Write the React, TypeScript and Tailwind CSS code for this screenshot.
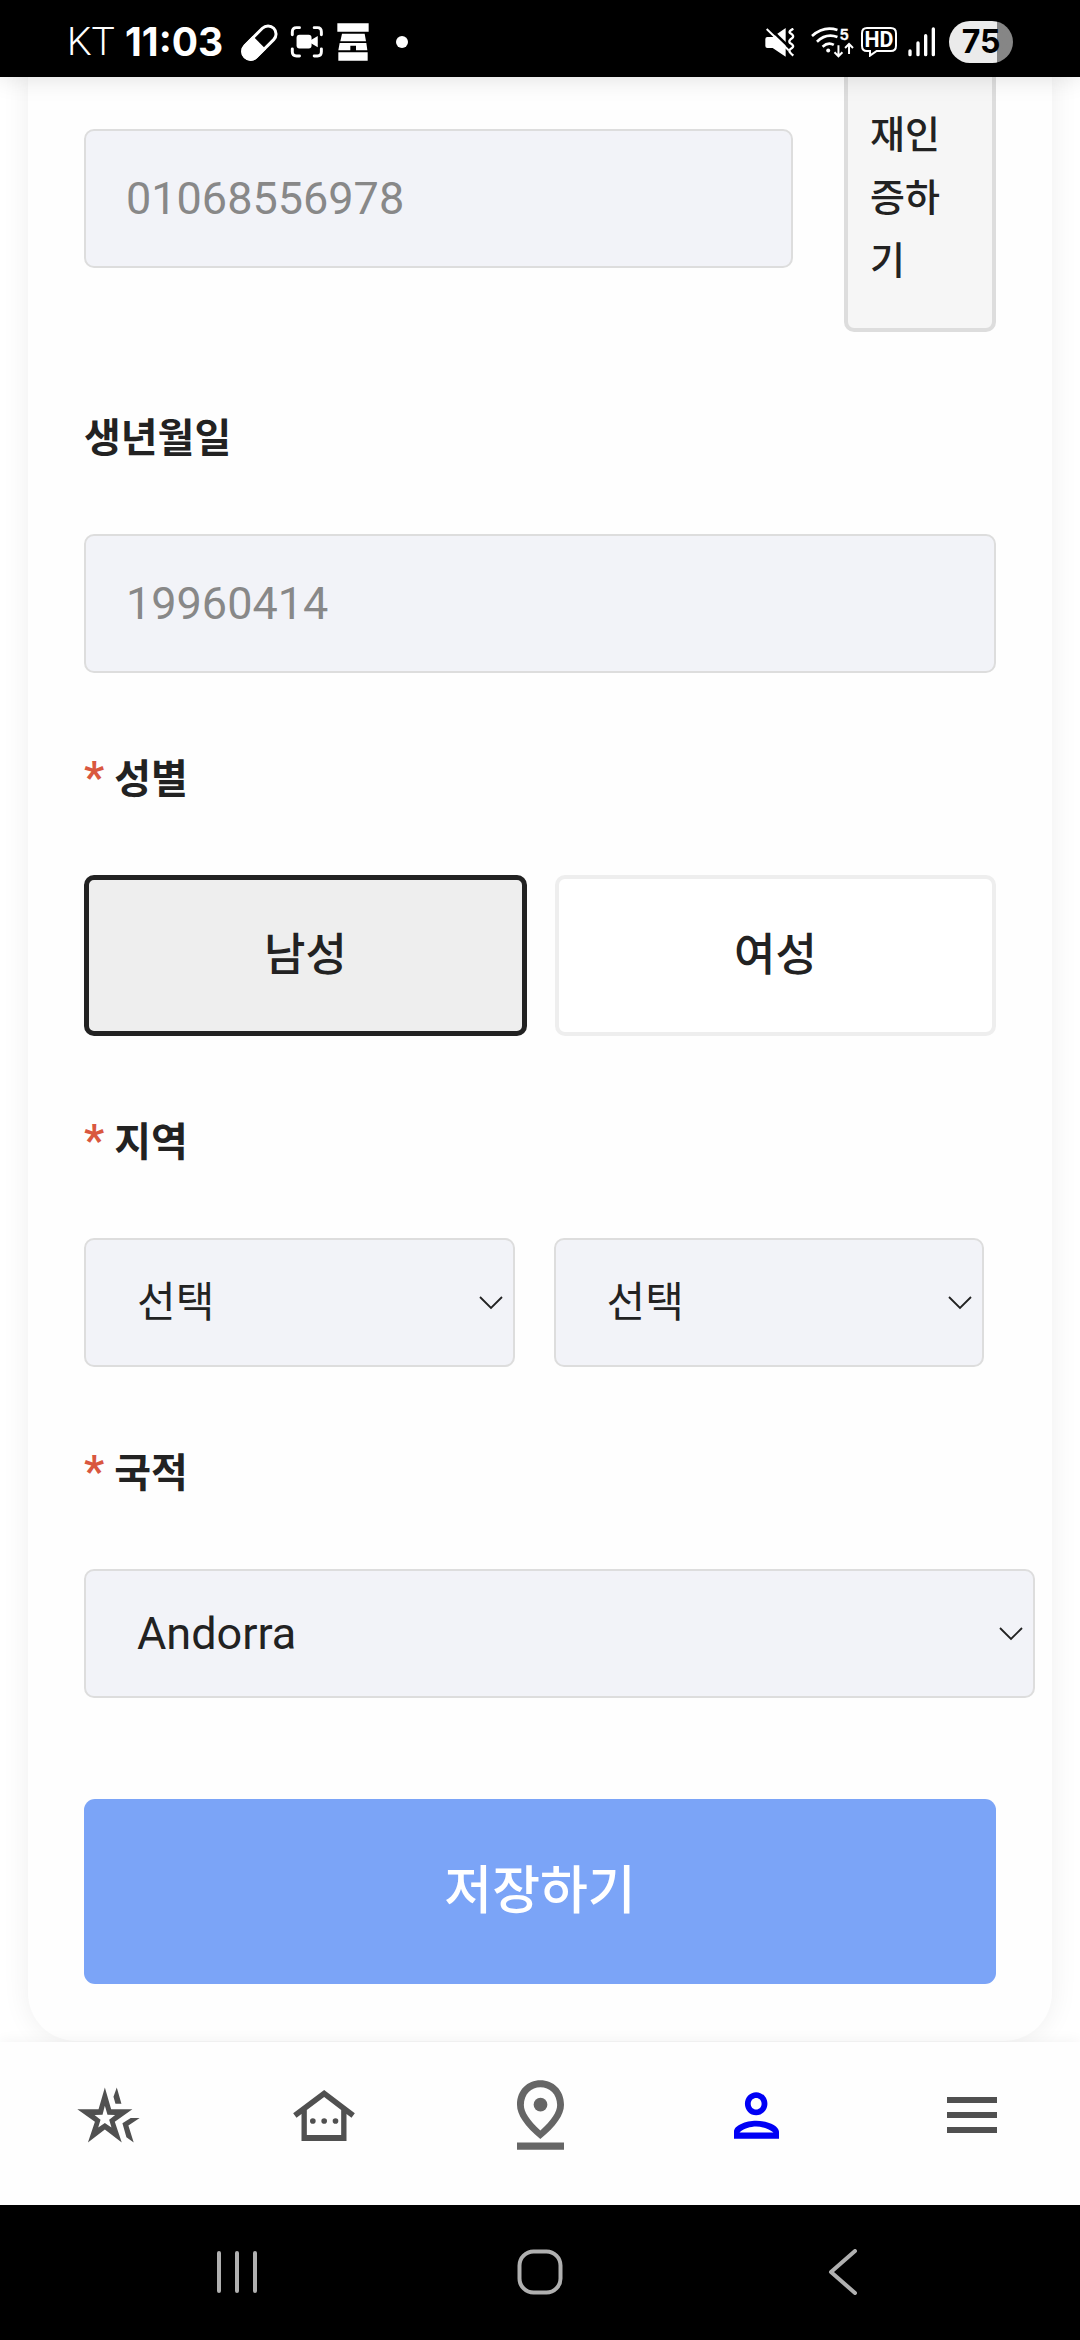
import { useState } from "react";
import type { ReactNode } from "react";

const LABEL = "block text-[40px] leading-[63px] font-bold text-[#222]";

function FieldLabel({ htmlFor, id, required, children }: { htmlFor?: string; id?: string; required?: boolean; children: ReactNode }) {
  const content = (
    <>
      {required && <span className="mr-[10px] text-[45px] leading-none font-semibold text-[#d9573f]">*</span>}
      {children}
    </>
  );
  return (
    <div className="mt-[75px] mb-16">
      {htmlFor ? (
        <label htmlFor={htmlFor} className={LABEL}>{content}</label>
      ) : (
        <span id={id} className={LABEL}>{content}</span>
      )}
    </div>
  );
}

function SelectBox({ id, label, options, textClass }: { id: string; label?: string; options: string[]; textClass: string }) {
  return (
    <div className="relative w-full">
      <select
        id={id}
        aria-label={label}
        className={`h-[129px] w-full appearance-none rounded-[10px] border-2 border-[#ddd] bg-[#f2f3f8] pl-[51px] pr-14 text-[#222] ${textClass}`}
      >
        {options.map((o) => (
          <option key={o}>{o}</option>
        ))}
      </select>
      <svg aria-hidden="true" className="pointer-events-none absolute top-1/2 right-3 h-[14px] w-6 -translate-y-1/2" viewBox="0 0 24 14" fill="none" stroke="#222" strokeWidth="1.8">
        <path d="M1 1 L12 12 L23 1" />
      </svg>
    </div>
  );
}

function StatusBar() {
  return (
    <header className="relative z-10 flex h-[77px] items-center justify-between bg-black pt-[7px] pr-[67px] pl-[67px] text-white shadow-[0_0_24px_rgba(0,0,0,0.13)]">
      <div className="flex items-center">
        <span className="w-[58px] font-['Roboto'] text-[39px] leading-[40px] font-light">KT</span>
        <span className="w-[116px] font-['Inter'] text-[39px] leading-[40px] font-bold">11:03</span>
        <svg aria-hidden="true" className="h-[37px] w-[37px]" viewBox="600 71 111 111" fill="none">
          <g transform="rotate(45 655 127)">
            <rect x="631" y="66" width="48" height="122" rx="24" stroke="#fff" strokeWidth="9" />
            <path d="M627 127 H683 V164 A28 28 0 0 1 627 164 Z" fill="#fff" />
          </g>
        </svg>
        <svg aria-hidden="true" className="ml-3 h-8 w-[34px]" viewBox="747 79 100 98" fill="none">
          <path d="M752 106 V97 Q752 84 765 84 H774 M819 84 H829 Q841 84 841 97 V106 M841 149 V158 Q841 171 829 171 H819 M774 171 H765 Q752 171 752 158 V149" stroke="#fff" strokeWidth="9" strokeLinecap="round" />
          <rect x="765" y="106" width="46" height="42" rx="9" fill="#fff" />
          <path d="M808 123 L830 110 V144 L808 131 Z" fill="#fff" />
        </svg>
        <svg aria-hidden="true" className="ml-[13px] h-[38px] w-8" viewBox="889 70 96 114" fill="#fff">
          <path d="M890 71 H984 V96 H890 Z M904 102 H972 L976 125 H899 Z M897 130 H977 L980 152 H946 V138 H929 V152 H893 Z M893 158 H981 V183 H893 Z" />
        </svg>
        <span className="ml-[27px] h-3 w-3 rounded-full bg-white" />
      </div>
      <div className="flex items-center">
        <svg aria-hidden="true" className="h-[29px] w-[30px]" viewBox="75 85 90 87" fill="none">
          <path d="M76 118 Q76 112 82 112 H98 L137 85 V171 L98 145 H82 Q76 145 76 139 Z" fill="#fff" />
          <path d="M83 80 L149 144" stroke="#000" strokeWidth="8" />
          <path d="M80 88 L146 152" stroke="#fff" strokeWidth="6" />
          <path d="M160 87 Q145 95 150 100 Q164 108 157 115 Q144 123 150 130 Q164 138 157 144 Q144 151 150 158 Q153 162 160 168" stroke="#fff" strokeWidth="7" />
        </svg>
        <svg aria-hidden="true" className="ml-4 h-[31px] w-[43px]" viewBox="211 85 130 93" fill="none" stroke="#fff" strokeWidth="8">
          <path d="M214 112 Q250 80 291 94 M229 129 Q257 102 291 115 M246 144 Q263 129 280 139" />
          <circle cx="263" cy="156" r="6" fill="#fff" stroke="none" />
          <path d="M294 140 V171 M282 161 L294 173 L306 161 M326 166 V137 M314 148 L326 136 L338 148" strokeWidth="6" />
          <text x="297" y="123" fill="#fff" stroke="#fff" strokeWidth="1" className="font-['Inter'] text-[45px] font-semibold">5</text>
        </svg>
        <svg aria-hidden="true" className="ml-[7px] h-[30px] w-9" viewBox="360 86 108 90" fill="none">
          <path d="M378 89 H449 Q465 89 465 105 V142 Q465 158 449 158 H407 L387 172 V158 H378 Q363 158 363 142 V105 Q363 89 378 89 Z" stroke="#fff" strokeWidth="6" />
          <text x="414" y="147" textAnchor="middle" fill="#fff" className="font-['Roboto'] text-[64px] font-bold">HD</text>
        </svg>
        <svg aria-hidden="true" className="ml-[11px] h-[30px] w-7" viewBox="500 83 84 90" fill="none" stroke="#fff" strokeWidth="10" strokeLinecap="round">
          <path d="M506 155 V166 M530 131 V166 M553 109 V166 M576 89 V166" />
        </svg>
        <span className="ml-[13px] flex h-[42px] w-16 items-center justify-center rounded-full bg-linear-to-r from-[#ebebeb] from-75% to-[#868686] to-75% font-['Inter'] text-[32px] leading-none font-bold text-black">
          75
        </span>
      </div>
    </header>
  );
}

function BottomNav() {
  const item = "flex flex-1 items-center justify-center self-stretch";
  return (
    <nav className="relative z-10 flex h-[163px] bg-[#fefefe] pb-[17px] text-[#505050] shadow-[0_0_14px_rgba(0,0,0,0.06)]">
      <a href="#featured" aria-label="추천" className={item}>
        <svg className="h-14 w-[63px]" viewBox="109 81 190 168" fill="currentColor" fillRule="evenodd">
          <path d="M193 82 L212 148 H276 L223 185 L244 248 L193 209 L142 248 L163 185 L110 148 H174 Z M193 137 L186 164 L162 165 L180 179 L173 203 L193 189 L213 203 L206 179 L224 165 L201 164 Z" />
          <path d="M229 82 L219 110 L225 131 H243 Z M298 174 H271 L246 190 L258 232 L280 248 L264 197 Z" />
        </svg>
      </a>
      <a href="#home" aria-label="홈" className={item}>
        <svg className="h-[51px] w-[62px]" viewBox="758 89 185 153" fill="currentColor" fillRule="evenodd">
          <path d="M851 89 L943 159 L933 172 L918 161 V242 H783 V161 L768 172 L758 159 Z M851 110 L799 149 V224 H902 V149 Z" />
          <circle cx="817" cy="182" r="8.500" />
          <circle cx="851" cy="182" r="8.500" />
          <circle cx="885" cy="182" r="8.500" />
        </svg>
      </a>
      <a href="#map" aria-label="지도" className={item}>
        <svg className="h-[70px] w-[47px]" viewBox="105 64 137 202" fill="#666" fillRule="evenodd">
          <path d="M173 64 C136 64 105 92 105 135 C105 165 128 197 173 235 C219 197 242 165 242 135 C242 92 211 64 173 64 Z M173 84 C147 84 125 104 125 136 C125 156 141 181 173 210 C206 181 222 156 222 136 C222 104 200 84 173 84 Z" />
          <circle cx="173.500" cy="135" r="20" />
          <path d="M105 245 H242 V266 H105 Z" />
        </svg>
      </a>
      <a href="#profile" aria-label="내 정보" aria-current="page" className={item}>
        <svg className="h-[47px] w-[45px]" viewBox="736 97 132 137" fill="#0000f5" fillRule="evenodd">
          <path d="M801 97 C783 97 768 112 768 131 C768 150 783 165 801 165 C819 165 834 150 834 131 C834 112 819 97 801 97 Z M801 114 C810 114 817 121 817 131 C817 141 810 148 801 148 C792 148 785 141 785 131 C785 121 792 114 801 114 Z" />
          <path d="M736 234 V213 C736 195 770 181 801 181 C833 181 868 195 868 213 V234 Z M752 215 H852 C838 204 817 198 801 198 C785 198 765 204 752 215 Z" />
        </svg>
      </a>
      <button type="button" aria-label="메뉴" className={item}>
        <svg className="h-9 w-[50px]" viewBox="0 0 50 36" fill="currentColor">
          <path d="M0 0 H50 V6 H0 Z M0 15 H50 V21 H0 Z M0 30 H50 V36 H0 Z" />
        </svg>
      </button>
    </nav>
  );
}

function SystemNav() {
  const item = "flex flex-1 items-center justify-center self-stretch";
  return (
    <div className="relative z-10 flex h-[135px] bg-black px-[86px] pb-[2px]">
      <button type="button" aria-label="최근 앱" className={item}>
        <svg className="h-[46px] w-[46px]" viewBox="0 0 46 46" stroke="#b0b0b0" strokeWidth="4" strokeLinecap="round">
          <path d="M5 4 V42 M23 4 V42 M41 4 V42" />
        </svg>
      </button>
      <button type="button" aria-label="홈 화면" className={item}>
        <svg className="h-[46px] w-[46px]" viewBox="0 0 46 46" fill="none" stroke="#b0b0b0" strokeWidth="4">
          <rect x="2.500" y="2.500" width="41" height="41" rx="14" />
        </svg>
      </button>
      <button type="button" aria-label="뒤로" className={item}>
        <svg className="h-[46px] w-[46px]" viewBox="0 0 46 46" fill="none" stroke="#b0b0b0" strokeWidth="4" strokeLinecap="round" strokeLinejoin="round">
          <path d="M35 2 L11 23 L35 44" />
        </svg>
      </button>
    </div>
  );
}

export default function App() {
  const [gender, setGender] = useState("남성");
  const input = "h-[139px] w-full min-w-0 rounded-[10px] border-2 border-[#ddd] bg-[#f2f3f8] px-10 text-[45px] text-[#888]";
  return (
    <div className="flex min-h-screen flex-col overflow-hidden bg-white font-['Roboto','Noto_Sans_CJK_KR',sans-serif]">
      <StatusBar />
      <main className="flex-1 px-7">
        <form
          onSubmit={(e) => e.preventDefault()}
          className="-mt-3 rounded-b-[48px] bg-[#fefefe] px-14 pb-[57px] shadow-[0_0_28px_rgba(0,0,0,0.07)]"
        >
          <div className="flex items-center gap-[51px]">
            <input aria-label="휴대폰 번호" className={input} defaultValue="01068556978" disabled />
            <button type="button" className="w-[152px] shrink-0 rounded-[10px] border-4 border-[#ddd] bg-[#f6f6f6] px-[22px] py-[35px] text-left text-[38px] leading-[63px] font-medium text-[#222]">
              재인증하기
            </button>
          </div>

          <FieldLabel htmlFor="birth">생년월일</FieldLabel>
          <input id="birth" className={input} defaultValue="19960414" disabled />

          <FieldLabel id="gender" required>성별</FieldLabel>
          <div role="group" aria-labelledby="gender" className="flex gap-7">
            {["남성", "여성"].map((g) => (
              <button
                key={g}
                type="button"
                aria-pressed={gender === g}
                onClick={() => setGender(g)}
                className={`h-[161px] flex-1 rounded-[10px] text-[45px] font-medium text-[#222] ${
                  gender === g ? "border-5 border-[#222] bg-[#eee]" : "border-4 border-[#eee] bg-white"
                }`}
              >
                {g}
              </button>
            ))}
          </div>

          <FieldLabel htmlFor="region" required>지역</FieldLabel>
          <div className="flex gap-[39px] pr-3">
            <SelectBox id="region" options={["선택"]} textClass="text-[42px]" />
            <SelectBox id="district" label="상세 지역" options={["선택"]} textClass="text-[42px]" />
          </div>

          <FieldLabel htmlFor="country" required>국적</FieldLabel>
          <div className="-mr-[39px]">
            <SelectBox id="country" options={["Andorra"]} textClass="text-[45px]" />
          </div>

          <button type="submit" className="mt-[101px] h-[185px] w-full rounded-[11px] bg-[#7ba4f7] text-[52px] font-medium text-white">
            저장하기
          </button>
        </form>
      </main>
      <BottomNav />
      <SystemNav />
    </div>
  );
}
